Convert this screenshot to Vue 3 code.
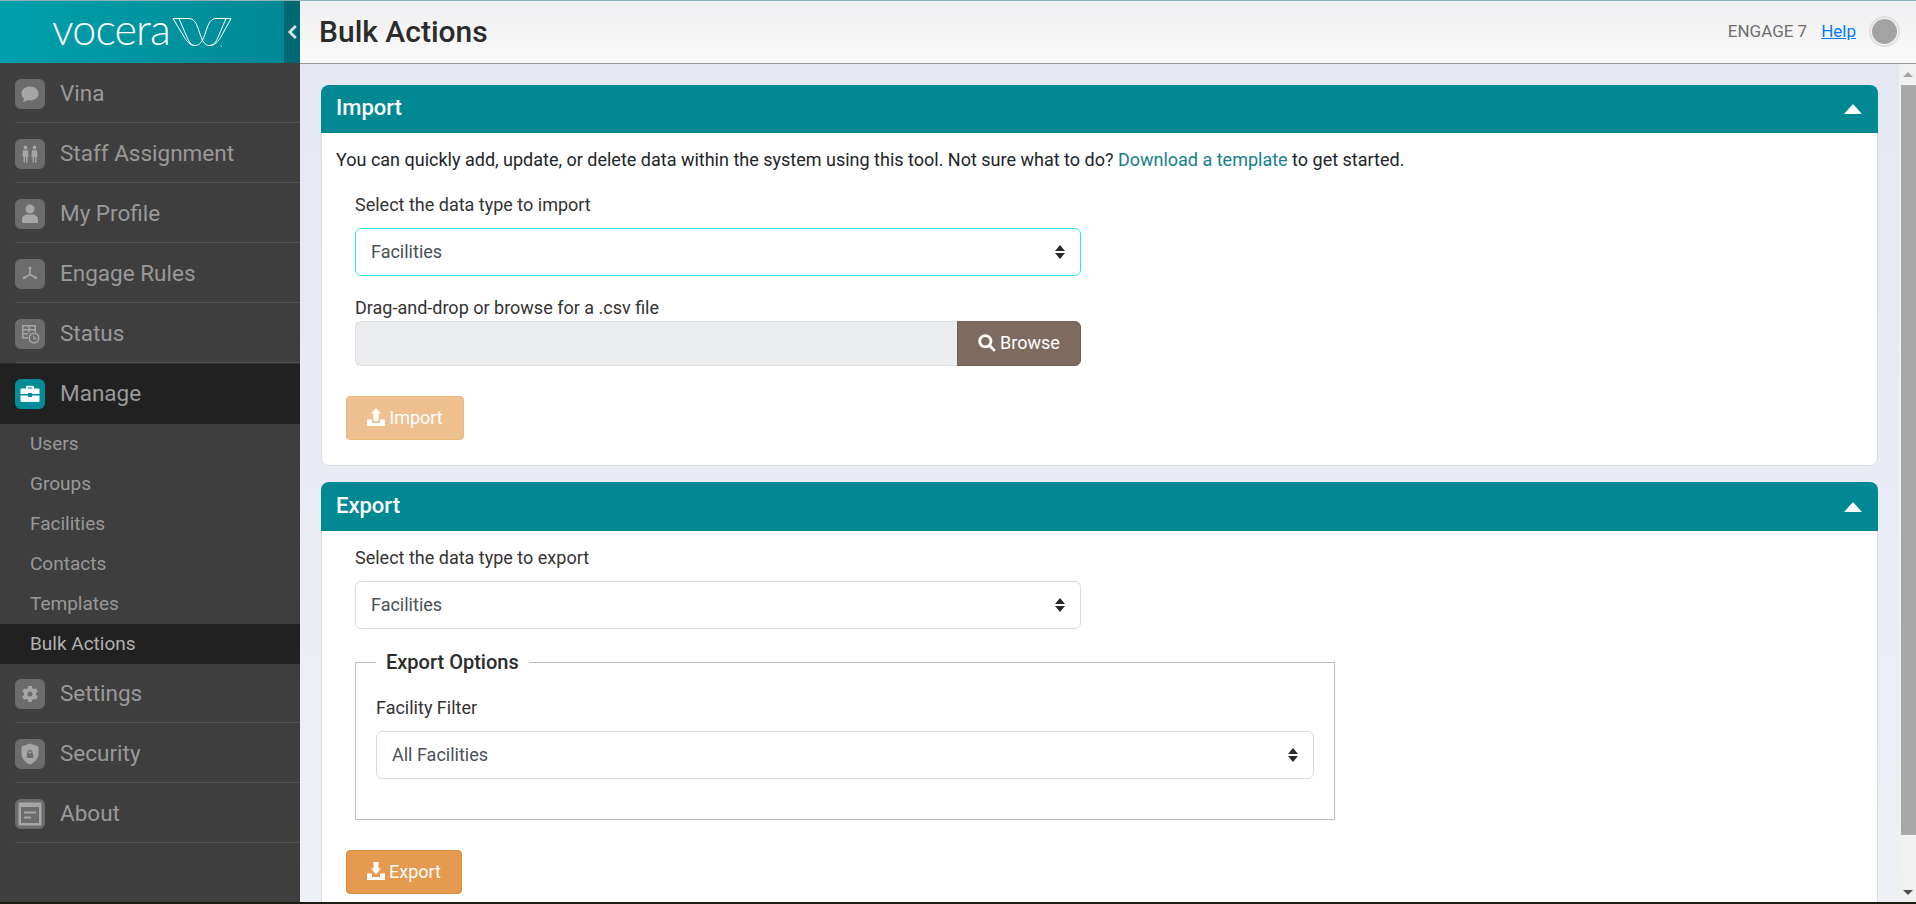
<template>
  <div class="app">
    <aside class="sidebar">
      <div class="brand">
        <div class="brand__logo">
          <span class="brand__word">vocera</span>
          <svg class="brand__mark" viewBox="0 0 60 30" width="60" height="30" fill="none" stroke="#fff" stroke-width="1">
            <path d="M1 1.500H16C22 1.500 24 5 27 14C30 24 33 28.500 37 28.500C42 28.500 44 25 47 18L54 1.500H59L50 18C46 25 43 28.500 37 28.500" />
            <path d="M1 1.500L11 18C15 25 18 28.500 23 28.500C28 28.500 31 24 34 14C37 5 39 1.500 45 1.500H59" />
            <path d="M1 1.500H7L14 18C17 25 19 28.500 23 28.500" />
            <circle cx="49" cy="29" r="0.800" fill="#8fd0d6" stroke="none" />
          </svg>
        </div>
        <div class="brand__toggle">
          <svg viewBox="0 0 10 14" width="11" height="16" fill="none" stroke="#dfe6e8" stroke-width="2.400">
            <path d="M8 1.500L2.500 7L8 12.500" />
          </svg>
        </div>
      </div>

      <nav class="nav">
        <template v-for="item in navItems" :key="item.label">
          <div class="nav__row" :class="{ 'nav__row--active': item.active }">
            <span class="nav__icon">
              <svg viewBox="0 0 24 24" width="24" height="24">
                <path
                  v-for="d in item.paths"
                  :key="d"
                  :d="d"
                  fill="currentColor"
                  fill-rule="evenodd"
                />
              </svg>
            </span>
            <span class="nav__label">{{ item.label }}</span>
          </div>
          <div v-if="item.children" class="subnav">
            <div
              v-for="child in item.children"
              :key="child"
              class="subnav__row"
              :class="{ 'subnav__row--active': child === 'Bulk Actions' }"
            >
              {{ child }}
            </div>
          </div>
        </template>
      </nav>
    </aside>

    <div class="main">
      <header class="topbar">
        <h1 class="topbar__title">Bulk Actions</h1>
        <div class="topbar__right">
          <span class="topbar__product">ENGAGE 7</span>
          <a class="topbar__help" href="#">Help</a>
          <span class="topbar__avatar"><span></span></span>
        </div>
      </header>

      <div class="body">
        <div class="content">
          <section class="card">
            <div class="card__head">
              <h2>Import</h2>
              <span class="card__caret"></span>
            </div>
            <div class="card__body card__body--import">
              <p class="intro">
                You can quickly add, update, or delete data within the system using this tool. Not sure what to do?
                <a href="#">Download a template</a> to get started.
              </p>
              <div class="field">
                <label>Select the data type to import</label>
                <div class="select select--focus">
                  <span>Facilities</span>
                  <i class="select__arrows"></i>
                </div>
              </div>
              <div class="field field--file">
                <label>Drag-and-drop or browse for a .csv file</label>
                <div class="file">
                  <div class="file__input"></div>
                  <button class="file__browse" type="button">
                    <svg viewBox="0 0 16 16" width="18" height="18" fill="none" stroke="#fff" stroke-width="2.500">
                      <circle cx="6.500" cy="6.500" r="5" />
                      <path d="M10.200 10.200L15 15" />
                    </svg>
                    Browse
                  </button>
                </div>
              </div>
              <button class="action action--disabled" type="button">
                <svg viewBox="0 0 18 18" width="18" height="18" fill="#fff">
                  <path d="M9 0L14 5.500H11.500V13H6.500V5.500H4Z" />
                  <path d="M0 11.500H5V15H13V11.500H18V18H0Z" />
                </svg>
                Import
              </button>
            </div>
          </section>

          <section class="card">
            <div class="card__head card__head--tall">
              <h2>Export</h2>
              <span class="card__caret"></span>
            </div>
            <div class="card__body card__body--export">
              <div class="field">
                <label>Select the data type to export</label>
                <div class="select">
                  <span>Facilities</span>
                  <i class="select__arrows"></i>
                </div>
              </div>
              <fieldset class="options">
                <legend>Export Options</legend>
                <label>Facility Filter</label>
                <div class="select">
                  <span>All Facilities</span>
                  <i class="select__arrows"></i>
                </div>
              </fieldset>
              <button class="action" type="button">
                <svg viewBox="0 0 18 18" width="18" height="18" fill="#fff">
                  <path d="M6.500 0H11.500V6.500H14L9 12.500L4 6.500H6.500Z" />
                  <path d="M0 11.500H5V15H13V11.500H18V18H0Z" />
                </svg>
                Export
              </button>
            </div>
          </section>
        </div>

        <div class="scrollbar">
          <i class="scrollbar__up"></i>
          <div class="scrollbar__thumb"></div>
          <i class="scrollbar__down"></i>
        </div>
      </div>
    </div>
  </div>
</template>

<script setup>
const navItems = [
  {
    label: 'Vina',
    paths: ['M12 4.500C7 4.500 3.500 7.500 3.500 11.500C3.500 13.500 4.500 15.200 6 16.400C5.800 17.800 5 19 4.200 19.800C6.500 19.800 8.500 18.900 9.800 18.100C10.500 18.300 11.200 18.400 12 18.400C17 18.400 20.500 15.400 20.500 11.500C20.500 7.500 17 4.500 12 4.500Z'],
  },
  {
    label: 'Staff Assignment',
    paths: [
      'M7.500 3.500A1.900 1.900 0 1 1 7.500 7.300A1.900 1.900 0 1 1 7.500 3.500ZM5 8.300H10L10.600 14.500H9.500V20.500H8V15H7V20.500H5.500V14.500H4.400Z',
      'M16.500 3.500A1.900 1.900 0 1 1 16.500 7.300A1.900 1.900 0 1 1 16.500 3.500ZM14 8.300H19L19.600 14.500H18.500V20.500H17V15H16V20.500H14.500V14.500H13.400Z',
    ],
  },
  {
    label: 'My Profile',
    paths: ['M12 2.500A4.500 4.500 0 1 1 12 11.500A4.500 4.500 0 1 1 12 2.500ZM4 17C4 14.500 7 12.500 9 12.500H15C17 12.500 20 14.500 20 17V20C20 20.500 19.500 21 19 21H5C4.500 21 4 20.500 4 20Z'],
  },
  {
    label: 'Engage Rules',
    paths: ['M12 4L14.200 6.800H12.800V12L17.300 14.600L18 13.400L19.400 16.700L15.800 17.100L16.500 16L12 13.400L7.500 16L8.200 17.100L4.600 16.700L6 13.400L6.700 14.600L11.200 12V6.800H9.800Z'],
  },
  {
    label: 'Status',
    paths: [
      'M4 3H18V10.500H16.500V8.500H11.700V10.500H10.300V8.500H5.500V11H10V12.500H5.500V15H10V16.500H4ZM5.500 4.500V7H10.300V4.500ZM11.700 4.500V7H16.500V4.500Z',
      'M16 10.500A5.500 5.500 0 1 1 16 21.500A5.500 5.500 0 1 1 16 10.500ZM16 12A4 4 0 1 0 16 20A4 4 0 1 0 16 12ZM15.300 13.500H16.500V16H18.500V17.200H15.300Z',
    ],
  },
  {
    label: 'Manage',
    active: true,
    paths: ['M8 6.500V5C8 4.200 8.700 3.800 9.500 3.800H14.500C15.300 3.800 16 4.200 16 5V6.500H20.500C21 6.500 21.500 7 21.500 7.500V12H14V11H10V12H2.500V7.500C2.500 7 3 6.500 3.500 6.500ZM9.800 5.500V6.500H14.200V5.500ZM2.500 13.500H10V15H14V13.500H21.500V19C21.500 19.500 21 20 20.500 20H3.500C3 20 2.500 19.500 2.500 19Z'],
    children: ['Users', 'Groups', 'Facilities', 'Contacts', 'Templates', 'Bulk Actions'],
  },
  {
    label: 'Settings',
    paths: ['M10.200 4H13.800L14.300 6.300L15.700 7.100L18 6.400L19.800 9.500L18 11.100V12.900L19.800 14.500L18 17.600L15.700 16.900L14.300 17.700L13.800 20H10.200L9.700 17.700L8.300 16.900L6 17.600L4.200 14.500L6 12.900V11.100L4.200 9.500L6 6.400L8.300 7.100L9.700 6.300ZM12 9.500A2.500 2.500 0 1 0 12 14.500A2.500 2.500 0 1 0 12 9.500Z'],
  },
  {
    label: 'Security',
    paths: ['M12 1.500L20.500 4.500V11.500C20.500 16.500 16.500 20.500 12 22.500C7.500 20.500 3.500 16.500 3.500 11.500V4.500ZM12 7.800C10.500 7.800 9.500 8.800 9.500 10.300V11.200H8.800V16H15.200V11.200H14.500V10.300C14.500 8.800 13.500 7.800 12 7.800ZM12 9.200C12.700 9.200 13.100 9.700 13.100 10.300V11.200H10.900V10.300C10.900 9.700 11.300 9.200 12 9.200Z'],
  },
  {
    label: 'About',
    paths: ['M0.500 0.500H23.500V23.500H0.500ZM3 5V21H21V5ZM6 9.500H18V11.500H6ZM6 14.500H13V16.500H6Z'],
  },
]
</script>

<style>
html,
body {
  margin: 0;
  height: 100%;
  overflow: hidden;
}
</style>

<style scoped>
.app {
  display: flex;
  height: 904px;
  font-family: Roboto, "Liberation Sans", sans-serif;
  font-size: 18px;
  color: #212529;
  border-bottom: 2px solid #1c1c14;
  border-top: 1px solid #8fb3ba;
  box-sizing: border-box;
  overflow: hidden;
}

.sidebar {
  width: 300px;
  flex: none;
  background: #3e3e3e;
  display: flex;
  flex-direction: column;
}

.brand {
  height: 62px;
  display: flex;
  background: linear-gradient(90deg, #00a0ac, #008893);
  flex: none;
}

.brand__logo {
  flex: 1;
  display: flex;
  align-items: center;
  justify-content: center;
  gap: 2px;
}

.brand__word {
  font-family: Lato, sans-serif;
  font-weight: 300;
  font-size: 43px;
  line-height: 1;
  letter-spacing: -0.800px;
  color: #fff;
  margin-top: -8px;
}

.brand__mark {
  margin-top: -1px;
}

.brand__toggle {
  width: 16px;
  background: #006873;
  display: flex;
  align-items: center;
  justify-content: center;
}

.nav {
  display: flex;
  flex-direction: column;
}

.nav__row {
  height: 60px;
  box-sizing: border-box;
  margin-left: 15px;
  border-bottom: 1px solid #525252;
  display: flex;
  align-items: center;
  gap: 15px;
  color: #999;
  padding-top: 3px;
}

.nav__row--active {
  margin-left: 0;
  padding: 0 0 0 15px;
  background: #212121;
  border-bottom: 0;
  border-top: 1px solid #2e2e2e;
  height: 61px;
}

.nav__icon {
  width: 30px;
  height: 30px;
  border-radius: 6px;
  background: #6c6c6c;
  color: #a6a6a6;
  display: flex;
  align-items: center;
  justify-content: center;
}

.nav__row--active .nav__icon {
  background: #008c99;
  color: #fff;
}

.nav__label {
  font-size: 22.500px;
  color: #999;
  margin-top: -2px;
}

.subnav {
  display: flex;
  flex-direction: column;
  margin-bottom: -1px;
}

.subnav__row {
  height: 40px;
  display: flex;
  align-items: center;
  padding: 0 0 2px 30px;
  box-sizing: border-box;
  font-size: 19px;
  color: #999;
}

.subnav__row--active {
  background: #212121;
  color: #b0b0b0;
}

.main {
  flex: 1;
  min-width: 0;
  display: flex;
  flex-direction: column;
}

.topbar {
  height: 63px;
  flex: none;
  box-sizing: border-box;
  border-bottom: 1px solid #999;
  background: linear-gradient(180deg, #eeeff1, #fbfafa);
  display: flex;
  align-items: center;
  justify-content: space-between;
  padding: 0 16px 2px 19px;
}

.topbar__title {
  margin: 0;
  font-size: 30px;
  font-weight: 500;
  color: #2b2b2b;
}

.topbar__right {
  display: flex;
  align-items: center;
}

.topbar__product {
  color: #6f6f6f;
  font-size: 17px;
}

.topbar__help {
  color: #007bff;
  margin-left: 14px;
  font-size: 17px;
}

.topbar__avatar {
  width: 31px;
  height: 31px;
  margin-left: 13px;
  box-sizing: border-box;
  border: 2px solid #e0e0e0;
  border-radius: 50%;
  display: flex;
  align-items: center;
  justify-content: center;
}

.topbar__avatar span {
  width: 25px;
  height: 25px;
  border-radius: 50%;
  background: #a3a3a3;
}

.body {
  flex: 1;
  min-height: 0;
  display: flex;
  background: linear-gradient(180deg, #e5e8f2, #edf0f5);
}

.content {
  flex: 1;
  min-width: 0;
  padding: 21px 21px 0;
  overflow: hidden;
  display: flex;
  flex-direction: column;
  gap: 16px;
}

.card {
  flex: none;
  background: #fff;
  border: 1px solid #dcdfe6;
  border-radius: 8px;
  box-sizing: border-box;
}

.card__head {
  height: 48px;
  margin: -1px -1px 0;
  box-sizing: border-box;
  padding: 0 16px 3px 15px;
  background: #008893;
  border-radius: 8px 8px 0 0;
  display: flex;
  align-items: center;
  justify-content: space-between;
}

.card__head--tall {
  height: 49px;
}

.card__head h2 {
  margin: 0;
  color: #fff;
  font-size: 22px;
  font-weight: 500;
}

.card__caret {
  width: 0;
  height: 0;
  margin-top: 3px;
  border-left: 9px solid transparent;
  border-right: 9px solid transparent;
  border-bottom: 10px solid #fff;
}

.card__body {
  padding: 15px 14px 0;
  box-sizing: border-box;
}

.card__body--import {
  height: 332px;
}

.card__body--export {
  height: 400px;
}

.intro {
  margin: 0 0 21px;
  line-height: 24px;
}

.intro a {
  color: #16808b;
  text-decoration: none;
}

.field {
  margin-left: 19px;
  width: 726px;
}

.field label {
  display: block;
  line-height: 24px;
  color: #333;
  margin-bottom: 11px;
}

.field--file {
  margin-top: 20px;
}

.field--file label {
  margin-bottom: 1px;
}

.select {
  height: 48px;
  box-sizing: border-box;
  border: 1px solid #dadada;
  border-radius: 6px;
  padding: 0 15px;
  display: flex;
  align-items: center;
  justify-content: space-between;
  color: #495057;
  background: #fff;
}

.select span {
  margin-top: -2px;
}

.select--focus {
  border-color: #2fe6f2;
}

.select__arrows {
  position: relative;
  width: 10px;
  height: 14px;
  flex: none;
}

.select__arrows::before,
.select__arrows::after {
  content: "";
  position: absolute;
  left: 0;
  width: 0;
  height: 0;
  border-left: 5px solid transparent;
  border-right: 5px solid transparent;
}

.select__arrows::before {
  top: 0;
  border-bottom: 6px solid #2a2a2a;
}

.select__arrows::after {
  bottom: 0;
  border-top: 6px solid #2a2a2a;
}

.file {
  display: flex;
  height: 45px;
}

.file__input {
  flex: 1;
  background: #ecedef;
  border: 1px solid #dcdee0;
  border-right: 0;
  border-radius: 6px 0 0 6px;
}

.file__browse {
  width: 124px;
  border: 1px solid #6f5f56;
  border-radius: 0 6px 6px 0;
  background: #7d6b62;
  color: #fff;
  font: inherit;
  display: flex;
  align-items: center;
  justify-content: center;
  gap: 4px;
  padding: 0 0 2px;
}

.action {
  width: 116px;
  height: 44px;
  margin-left: 10px;
  border: 1px solid #dd8d3b;
  border-radius: 4px;
  background: #e59a50;
  color: #fff;
  font: inherit;
  display: flex;
  align-items: center;
  justify-content: center;
  gap: 4px;
  padding: 0 0 2px;
}

.action--disabled {
  margin-top: 30px;
  width: 118px;
  background: #efc08f;
  border-color: #ecb679;
}

.options {
  width: 980px;
  height: 170px;
  box-sizing: border-box;
  margin: 21px 0 30px 19px;
  padding: 22px 20px 0;
  border: 1px solid #bdbdbd;
}

.options legend {
  padding: 0 10px;
  font-size: 20px;
  font-weight: 500;
  line-height: 24px;
  color: #2b2b2b;
}

.options label {
  display: block;
  line-height: 24px;
  color: #333;
  margin-bottom: 11px;
}

.scrollbar {
  width: 17px;
  flex: none;
  background: #f1f1f1;
  position: relative;
  display: flex;
  flex-direction: column;
  align-items: flex-end;
}

.scrollbar__thumb {
  width: 15px;
  height: 750px;
  margin-top: 21px;
  background: #a8a8a8;
}

.scrollbar__up,
.scrollbar__down {
  position: absolute;
  right: 3px;
  width: 0;
  height: 0;
  border-left: 5px solid transparent;
  border-right: 5px solid transparent;
}

.scrollbar__up {
  top: 8px;
  border-bottom: 5px solid #a3a3a3;
}

.scrollbar__down {
  bottom: 7px;
  border-top: 5px solid #505050;
}
</style>
